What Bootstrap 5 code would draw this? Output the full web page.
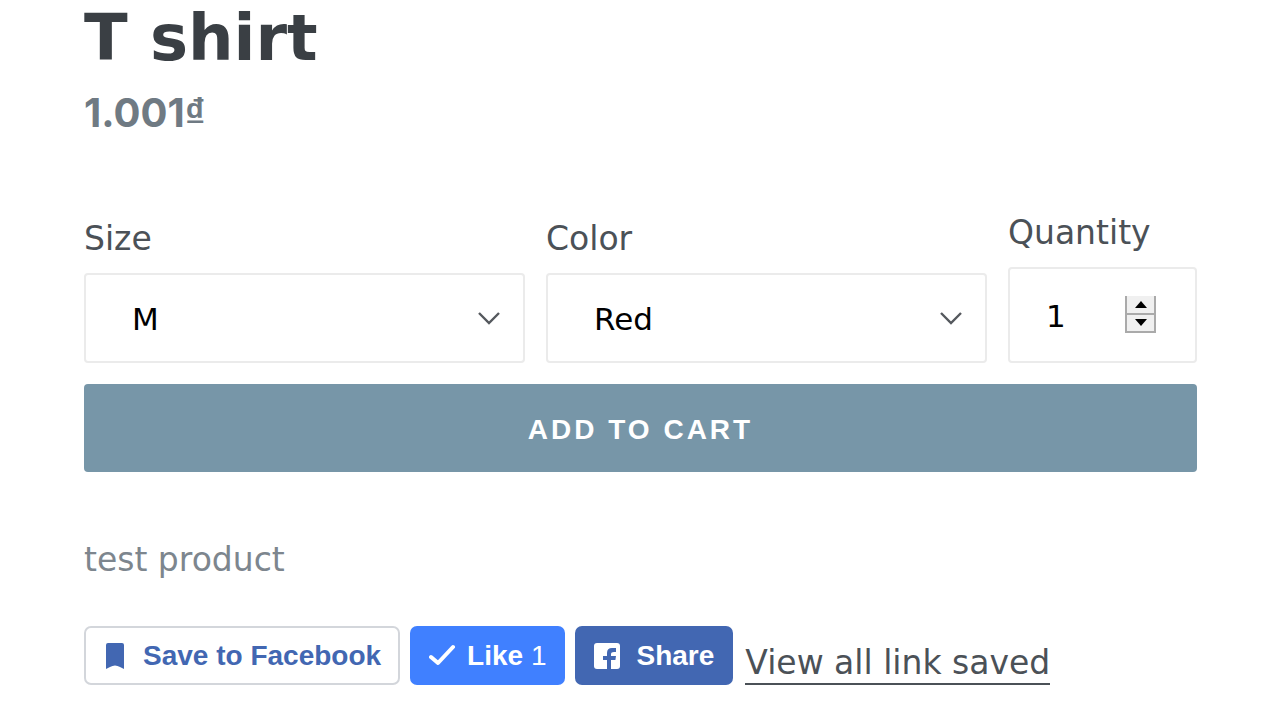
<!DOCTYPE html>
<html lang="en">
<head>
<meta charset="utf-8">
<meta name="viewport" content="width=device-width, initial-scale=1">
<title>T shirt</title>
<link rel="stylesheet" href="https://cdn.jsdelivr.net/npm/bootstrap@5.3.0/dist/css/bootstrap.min.css">
<style>
  body { font-family: "DejaVu Sans", sans-serif; font-size: 33px; line-height: 40px; color: #4b5157; background: #fff; }
  .product { padding: 0 83px 32px 84px; }
  .product-title { font-size: 64px; line-height: 76px; font-weight: 700; color: #3a3f44; margin: 0 0 9px; }
  .product-price { font-family: Inter, sans-serif; font-size: 40px; line-height: 56px; font-weight: 700; color: #6f7a83; margin: 0; }
  .currency { font-family: "Liberation Sans", sans-serif; font-weight: 700; }
  .options { display: grid; grid-template-columns: 7fr 7fr 3fr; gap: 21px; margin-top: 72px; }
  .option-label { line-height: 40px; margin-bottom: 14px; }
  .form-select.field, .form-control.field { font-size: 31px; line-height: 40px; color: #000; border: 2px solid #ebebeb; border-radius: 4px; box-shadow: none; }
  .form-select.field { height: 90px; padding: 2px 60px 0 46px;
    background-image: url("data:image/svg+xml,%3Csvg xmlns='http://www.w3.org/2000/svg' viewBox='0 0 24 16'%3E%3Cpath d='M2 3l10 10L22 3' fill='none' stroke='%2355595e' stroke-width='2.4'/%3E%3C/svg%3E");
    background-size: 24px 16px; background-position: right 22px center; }
  .form-control.field { height: 96px; padding: 2px 76px 0 36px; appearance: textfield; }
  .field::-webkit-inner-spin-button { appearance: none; margin: 0; }
  .stepper { right: 41px; top: 29px; width: 31px; height: 37px; background: #aaa; padding: 0 2px 2px; gap: 2px; }
  .stepper button { flex: 1; border: 0; padding: 0; background: #f0f0f0; display: flex; align-items: center; justify-content: center; }
  .btn-cart { font-family: "Liberation Sans", sans-serif; margin-top: 21px; height: 88px; border: 0; padding: 3px 0 0; border-radius: 4px; background: #7796a8; color: #fff; font-size: 28px; font-weight: 700; letter-spacing: 3px; }
  .btn-cart:hover { background: #67889b; color: #fff; }
  .description { color: #7d868e; margin: 68px 0 46px; }
  .btn-social { font-family: "Liberation Sans", sans-serif; font-size: 28px; line-height: 40px; font-weight: 700; height: 59px; border-radius: 7px; padding: 0 17px; border: 2px solid transparent; white-space: nowrap; }
  .btn-save, .btn-save:hover { border-color: #d3d6db; color: #4267b2; background: #fff; }
  .btn-like, .btn-like:hover { background: #4080ff; color: #fff; }
  .btn-share, .btn-share:hover { background: #4267b2; color: #fff; }
  .social-row { gap: 10px; }
  .saved-link { color: #4b5157; text-decoration: none; border-bottom: 2px solid #4b5157; margin-left: 2px; }
</style>
</head>
<body>
<main class="product container-fluid">
  <h1 class="product-title">T shirt</h1>
  <p class="product-price">1.001<span class="currency">₫</span></p>
  <form onsubmit="return false">
    <div class="options align-items-end">
      <div>
        <label class="option-label d-block" for="size">Size</label>
        <select class="form-select field" id="size"><option>M</option></select>
      </div>
      <div>
        <label class="option-label d-block" for="color">Color</label>
        <select class="form-select field" id="color"><option>Red</option></select>
      </div>
      <div>
        <label class="option-label d-block" for="quantity">Quantity</label>
        <div class="position-relative">
          <input class="form-control field" type="number" id="quantity" value="1" min="1">
          <div class="stepper position-absolute d-flex flex-column">
            <button type="button" aria-label="Increase" onclick="quantity.stepUp()"><svg width="12" height="7" viewBox="0 0 12 7"><path d="M6 0l6 7H0z"/></svg></button>
            <button type="button" aria-label="Decrease" onclick="quantity.stepDown()"><svg width="12" height="7" viewBox="0 0 12 7"><path d="M0 0h12L6 7z"/></svg></button>
          </div>
        </div>
      </div>
    </div>
    <button class="btn btn-cart w-100" type="submit">ADD TO CART</button>
  </form>
  <p class="description">test product</p>
  <div class="social-row d-flex flex-wrap align-items-end">
    <button class="btn btn-social btn-save d-flex align-items-center" type="button">
      <svg class="me-3" width="24" height="28" viewBox="0 0 24 28" fill="#4267b2"><path d="M3 3q0-2 2-2h14q2 0 2 2v24l-4-2q-5-3-10 0l-4 2z"/></svg>
      <span>Save to Facebook</span>
    </button>
    <button class="btn btn-social btn-like d-flex align-items-center" type="button">
      <svg class="me-2" width="30" height="28" viewBox="0 0 30 28" fill="none" stroke="#fff" stroke-width="4" stroke-linecap="round" stroke-linejoin="round"><path d="M2 15l7 6L24 5"/></svg>
      <span>Like <span class="fw-normal">1</span></span>
    </button>
    <button class="btn btn-social btn-share d-flex align-items-center" type="button">
      <svg class="me-3" width="26" height="28" viewBox="0 0 26 28"><rect y="1" width="26" height="26" rx="3" fill="#fff"/><path d="M13 27V18H9v-4h4v-3q0-5 5-5h4v4h-2q-3 0-3 2v2h5l-.6 4H17v9z" fill="#4267b2"/></svg>
      <span>Share</span>
    </button>
    <a class="saved-link" href="#">View all link saved</a>
  </div>
</main>
<script src="https://cdn.jsdelivr.net/npm/bootstrap@5.3.0/dist/js/bootstrap.bundle.min.js"></script>
</body>
</html>
